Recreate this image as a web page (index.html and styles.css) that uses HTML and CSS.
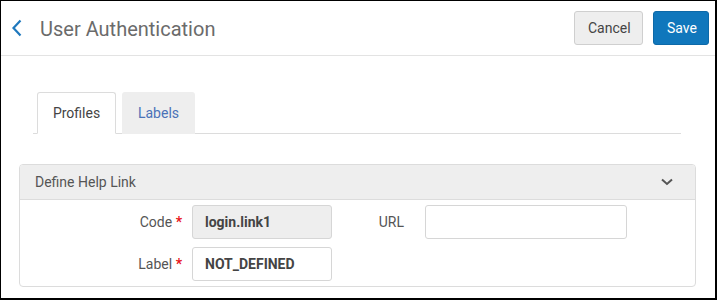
FILE: index.html
```html
<!DOCTYPE html>
<html lang="en">
<head>
    <meta charset="UTF-8">
    <meta name="viewport" content="width=device-width, initial-scale=1.0">
    <title>User Authentication</title>
    <link rel="stylesheet" href="styles.css">
</head>
<body>
    <div class="frame">
        <header class="page-header">
            <a class="back-link" href="#" aria-label="Back">
                <svg width="12" height="18" viewBox="0 0 12 18">
                    <path d="M9.5 1.5 L2.5 9 L9.5 16.5" fill="none" stroke="#1f78bd" stroke-width="2.2"/>
                </svg>
            </a>
            <h1 class="page-title">User Authentication</h1>
            <div class="header-actions">
                <button class="btn btn-cancel">Cancel</button>
                <button class="btn btn-save">Save</button>
            </div>
        </header>

        <main>
            <ul class="tabs">
                <li class="tab active">Profiles</li>
                <li class="tab">Labels</li>
            </ul>

            <section class="panel">
                <div class="panel-header">
                    <span>Define Help Link</span>
                    <svg class="toggle" width="12" height="8" viewBox="0 0 12 8">
                        <path d="M1 1.5 L6 6 L11 1.5" fill="none" stroke="#555" stroke-width="2"/>
                    </svg>
                </div>
                <div class="panel-body">
                    <label class="field-label">Code <span class="req">*</span></label>
                    <div class="field-input disabled">login.link1</div>
                    <label class="field-label url-label">URL</label>
                    <div class="field-input"></div>

                    <label class="field-label">Label <span class="req">*</span></label>
                    <div class="field-input">NOT_DEFINED</div>
                </div>
            </section>
        </main>
    </div>
</body>
</html>
```

FILE: styles.css
```css
:root {
    --blue: #1077bc;
    --border: #dcdcdc;
    --grey-bg: #eeeeee;
    --text: #555;
}

* {
    margin: 0;
    padding: 0;
    box-sizing: border-box;
}

body {
    font-family: Roboto, "Liberation Sans", Arial, sans-serif;
    font-size: 14px;
    color: var(--text);
    background: #fff;
}

.frame {
    width: 717px;
    height: 300px;
    border: solid #000;
    border-width: 1px 2px 2px 1px;
    overflow: hidden;
}

.page-header {
    display: flex;
    align-items: center;
    height: 55px;
    padding: 0 6px 0 10px;
    border-bottom: 1px solid #e3e3e3;
}

.back-link {
    display: flex;
    align-items: center;
}

.page-title {
    font-size: 20px;
    font-weight: normal;
    color: #6b6b6b;
    margin-left: 17px;
    padding-top: 2px;
}

.header-actions {
    margin-left: auto;
    display: flex;
    gap: 10px;
}

.btn {
    height: 34px;
    padding: 0 13px;
    border-radius: 3px;
    font-family: inherit;
    font-size: 14px;
    cursor: pointer;
}

.btn-cancel {
    width: 69px;
    background: var(--grey-bg);
    border: 1px solid #cfcfcf;
    color: #444;
}

.btn-save {
    width: 56px;
    background: var(--blue);
    border: 1px solid #0d69a8;
    color: #fff;
}

.tabs {
    display: flex;
    gap: 6px;
    list-style: none;
    margin: 36px 34px 0 32px;
    padding-left: 4px;
    border-bottom: 1px solid var(--border);
    height: 42px;
}

.tab {
    display: flex;
    align-items: center;
    justify-content: center;
    height: 42px;
    border-radius: 3px 3px 0 0;
    background: var(--grey-bg);
    color: #4a72b8;
    width: 73px;
}

.tab.active {
    width: 79px;
    background: #fff;
    color: #444;
    border: 1px solid var(--border);
    border-bottom-color: #fff;
}

.panel {
    margin: 30px 19px 0 18px;
    border: 1px solid var(--border);
    border-radius: 4px;
    overflow: hidden;
}

.panel-header {
    display: flex;
    align-items: center;
    justify-content: space-between;
    height: 35px;
    padding: 0 22px 0 15px;
    background: var(--grey-bg);
    border-bottom: 1px solid var(--border);
    color: #555;
}

.panel-body {
    display: grid;
    grid-template-columns: 172px 140px 93px 202px;
    row-gap: 8px;
    align-items: center;
    padding: 5px 0 5px;
}

.field-label {
    text-align: right;
    padding-right: 10px;
    color: #555;
}

.field-label.url-label {
    padding-right: 21px;
}

.req {
    color: #e8141b;
    font-weight: bold;
}

.field-input {
    height: 34px;
    border: 1px solid #d6d6d6;
    border-radius: 3px;
    padding: 0 12px;
    display: flex;
    align-items: center;
    font-weight: bold;
    color: #444;
}

.field-input.disabled {
    background: var(--grey-bg);
}
```
